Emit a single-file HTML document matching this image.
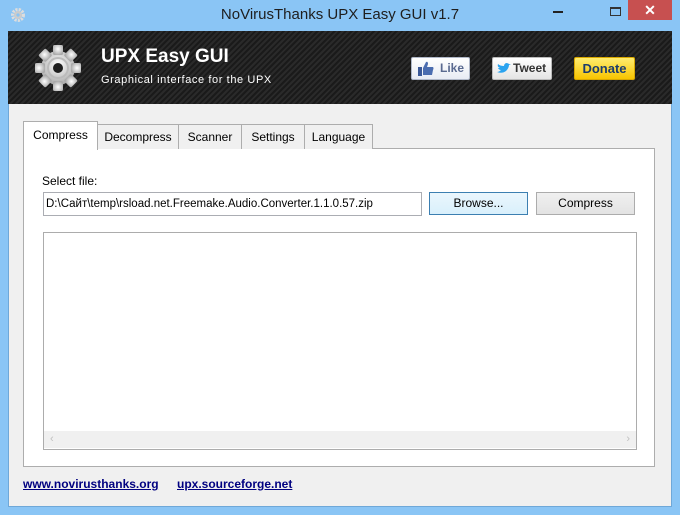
<!DOCTYPE html>
<html><head><meta charset="utf-8"><style>
*{margin:0;padding:0;box-sizing:border-box}
body{width:680px;height:515px;background:#8ac5f5;position:relative;overflow:hidden;font-family:"Liberation Sans",sans-serif;font-size:12px;color:#000}
.a{position:absolute}
#title{left:0;top:0;width:680px;height:31px;text-align:center;font-size:15px;line-height:30px;color:#1e1e1e}
#close{left:628px;top:0;width:44px;height:20px;background:#c75050;color:#fff;text-align:center;font-size:14px;line-height:20px;font-weight:bold}
#client{left:8px;top:31px;width:664px;height:476px;background:#f0f0f0;border:1px solid #6fa8d8;border-top:none}
#hdr{left:8px;top:31px;width:664px;height:73px;background:repeating-linear-gradient(135deg,#2a2a2a 0 2px,#1a1a1a 2px 4px)}
.btn{border:1px solid #acacac;background:linear-gradient(#f0f0f0,#e3e3e3);text-align:center;font-size:12px;line-height:21px}
.tab{top:124px;height:25px;border:1px solid #adadad;border-bottom:none;background:#f0f0f0;text-align:center;line-height:24px;font-size:12px}
.hb{top:57px;height:23px;border:1px solid #b0b8c8;border-radius:2px;font-weight:bold;font-size:12px;line-height:21px}
a{color:#000080;font-weight:bold;font-size:12px;text-decoration:underline}
</style></head><body>
<div class="a" id="title">NoVirusThanks UPX Easy GUI v1.7</div>
<svg class="a" style="left:10px;top:7px" width="16" height="16" viewBox="0 0 16 16"><circle cx="8" cy="8" r="5.5" fill="none" stroke="#ddd" stroke-width="3" stroke-dasharray="2.2 1.1"/><circle cx="8" cy="8" r="4" fill="#ccc"/><circle cx="8" cy="8" r="1.6" fill="#8ac5f5"/></svg>
<div class="a" style="left:553px;top:11px;width:10px;height:2px;background:#222"></div>
<div class="a" style="left:610px;top:7px;width:11px;height:9px;border:1px solid #333;border-top-width:2px"></div>
<div class="a" id="close">✕</div>
<div class="a" id="client"></div>
<div class="a" id="hdr"></div>
<svg class="a" style="left:33px;top:43px" width="50" height="50" viewBox="0 0 50 50">
<defs><radialGradient id="g" cx="50%" cy="40%" r="60%"><stop offset="0" stop-color="#fff"/><stop offset="1" stop-color="#aaa"/></radialGradient></defs>
<g fill="url(#g)"><circle cx="25" cy="25" r="17"/>
<g id="t"><rect x="20" y="2" width="10" height="10" rx="1.5"/></g>
<use href="#t" transform="rotate(45 25 25)"/><use href="#t" transform="rotate(90 25 25)"/><use href="#t" transform="rotate(135 25 25)"/><use href="#t" transform="rotate(180 25 25)"/><use href="#t" transform="rotate(225 25 25)"/><use href="#t" transform="rotate(270 25 25)"/><use href="#t" transform="rotate(315 25 25)"/></g>
<circle cx="25" cy="25" r="10" fill="none" stroke="#bbb" stroke-width="2"/>
<circle cx="25" cy="25" r="5" fill="#1e1e1e"/></svg>
<div class="a" style="left:101px;top:46px;color:#fff;font-weight:bold;font-size:19px">UPX Easy GUI</div>
<div class="a" style="left:101px;top:74px;color:#fff;font-size:11px;letter-spacing:0.6px">Graphical interface for the UPX</div>
<div class="a hb" style="left:411px;width:59px;background:linear-gradient(#fff,#e8ecf4);color:#5a6a90;padding-left:28px">Like</div>
<svg class="a" style="left:418px;top:61px" width="16" height="15" viewBox="0 0 16 15"><rect x="0" y="6" width="4" height="9" fill="#3b5998"/><path d="M5 7 L8 1 Q10 0 10 3 L9 6 L15 6 Q16 7 15 9 L14 14 L5 14Z" fill="#4b6db0"/></svg>
<div class="a hb" style="left:492px;width:60px;background:linear-gradient(#fff,#e4e4e4);color:#333;padding-left:20px;border-color:#bbb">Tweet</div>
<svg class="a" style="left:497px;top:63px" width="14" height="11" viewBox="0 0 14 11"><path d="M0 9 Q5 11 9 8 Q12 5 12 2 L14 1 L12 1 Q11 0 9 0 Q7 1 7 3 Q3 3 1 1 Q0 4 3 5 L1 5 Q2 7 4 7 Q2 9 0 9Z" fill="#2aa3ef"/></svg>
<div class="a hb" style="left:574px;width:61px;background:linear-gradient(#ffec70,#f7c400);color:#1c3c6c;border-color:#d9a800;text-align:center;font-size:13px">Donate</div>
<div class="a" style="left:23px;top:148px;width:632px;height:319px;background:#fff;border:1px solid #adadad"></div>
<div class="a tab" style="left:97px;width:82px">Decompress</div>
<div class="a tab" style="left:178px;width:64px">Scanner</div>
<div class="a tab" style="left:241px;width:64px">Settings</div>
<div class="a tab" style="left:304px;width:69px">Language</div>
<div class="a tab" style="left:23px;top:121px;width:75px;height:29px;background:#fff;line-height:26px">Compress</div>
<div class="a" style="left:42px;top:174px">Select file:</div>
<div class="a" style="left:43px;top:192px;width:379px;height:24px;border:1px solid #abadb3;background:#fff;padding-left:2px;line-height:22px;font-size:11.5px;white-space:nowrap;overflow:hidden">D:\Сайт\temp\rsload.net.Freemake.Audio.Converter.1.1.0.57.zip</div>
<div class="a btn" style="left:429px;top:192px;width:99px;height:23px;border-color:#3c7fb1;background:linear-gradient(#eaf6fd,#d9f0fc)">Browse...</div>
<div class="a btn" style="left:536px;top:192px;width:99px;height:23px">Compress</div>
<div class="a" style="left:43px;top:232px;width:594px;height:218px;border:1px solid #acacac;background:#fff"></div>
<div class="a" style="left:44px;top:431px;width:592px;height:17px;background:#f0f0f0;color:#c0c0c0;font-size:11px;line-height:16px"><span style="position:absolute;left:6px">‹</span><span style="position:absolute;right:6px">›</span></div>
<a class="a" style="left:23px;top:477px">www.novirusthanks.org</a>
<a class="a" style="left:177px;top:477px">upx.sourceforge.net</a>
</body></html>
